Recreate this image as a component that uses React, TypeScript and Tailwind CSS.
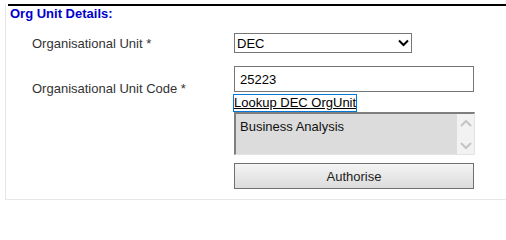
import type { ReactNode } from "react";

function FieldLabel({ children }: { children: ReactNode }) {
  return <div className="w-[202px] shrink-0 leading-[15px] text-[#333333]">{children}</div>;
}

function Chevron({ up = false, className }: { up?: boolean; className?: string }) {
  return (
    <svg width="12" height="8" viewBox="0 0 12 8" className={className}>
      <path
        d={up ? "M1 7 L6 2 L11 7" : "M1 1 L6 6 L11 1"}
        fill="none"
        stroke="currentColor"
        strokeWidth="2"
      />
    </svg>
  );
}

export default function App() {
  return (
    <div className="h-[205px] w-[506px] overflow-hidden bg-white pt-[4px] font-['Liberation_Sans',Arial,sans-serif] text-[13px] text-black">
      <div className="ml-[5px] h-[196px] border-b border-l border-[#e6e6e6]">
        <div className="ml-[2px] border-t-2 border-black">
          <h2 className="pl-[2px] text-[13px] font-bold leading-[15px] text-[#0000cc]">Org Unit Details:</h2>
        </div>

        <div className="mt-[12px] pl-[26px]">
          {/* Organisational Unit */}
          <div className="flex h-[20px] items-center">
            <FieldLabel>Organisational Unit *</FieldLabel>
            <div className="flex h-[20px] w-[178px] items-center justify-between border border-[#767676] pl-[2px] pr-[2px]">
              <span className="leading-[15px]">DEC</span>
              <svg width="11" height="8" viewBox="0 0 11 8">
                <path d="M1 1.5 L5.5 6 L10 1.5" fill="none" stroke="#000" strokeWidth="2" />
              </svg>
            </div>
          </div>

          {/* Organisational Unit Code */}
          <div className="mt-[13px] flex items-center">
            <FieldLabel>Organisational Unit Code *</FieldLabel>
            <div className="flex flex-col items-start">
              <div className="flex h-[26px] w-[240px] items-center border border-[#767676] pl-[5px]">
                <span className="leading-[15px]">25223</span>
              </div>
              <a href="#" className="mt-[3px] h-[16px] leading-[16px] text-black underline outline outline-[#0078d7]">
                Lookup DEC OrgUnit
              </a>
            </div>
          </div>

          <div className="ml-[202px]">
            <div className="mt-[1px] flex h-[43px] w-[241px] border-b border-l-2 border-r border-t-2 border-b-[#e3e3e3] border-l-[#7f7f7f] border-r-[#e3e3e3] border-t-[#7f7f7f] bg-[#dcdcdc]">
              <div className="flex-1 pl-[4px] pt-[5px] leading-[15px] text-[#111]">Business Analysis</div>
              <div className="flex w-[17px] flex-col items-center justify-between bg-[#f2f2f2] pb-[4px] pt-[5px] text-[#c4c4c4]">
                <Chevron up />
                <Chevron />
              </div>
            </div>

            <button
              type="button"
              className="mt-[8px] flex h-[26px] w-[240px] items-center justify-center border border-[#707070] bg-gradient-to-b from-[#f4f4f4] to-[#dcdcdc] leading-[15px] text-[#222]"
            >
              Authorise
            </button>
          </div>
        </div>
      </div>
    </div>
  );
}
